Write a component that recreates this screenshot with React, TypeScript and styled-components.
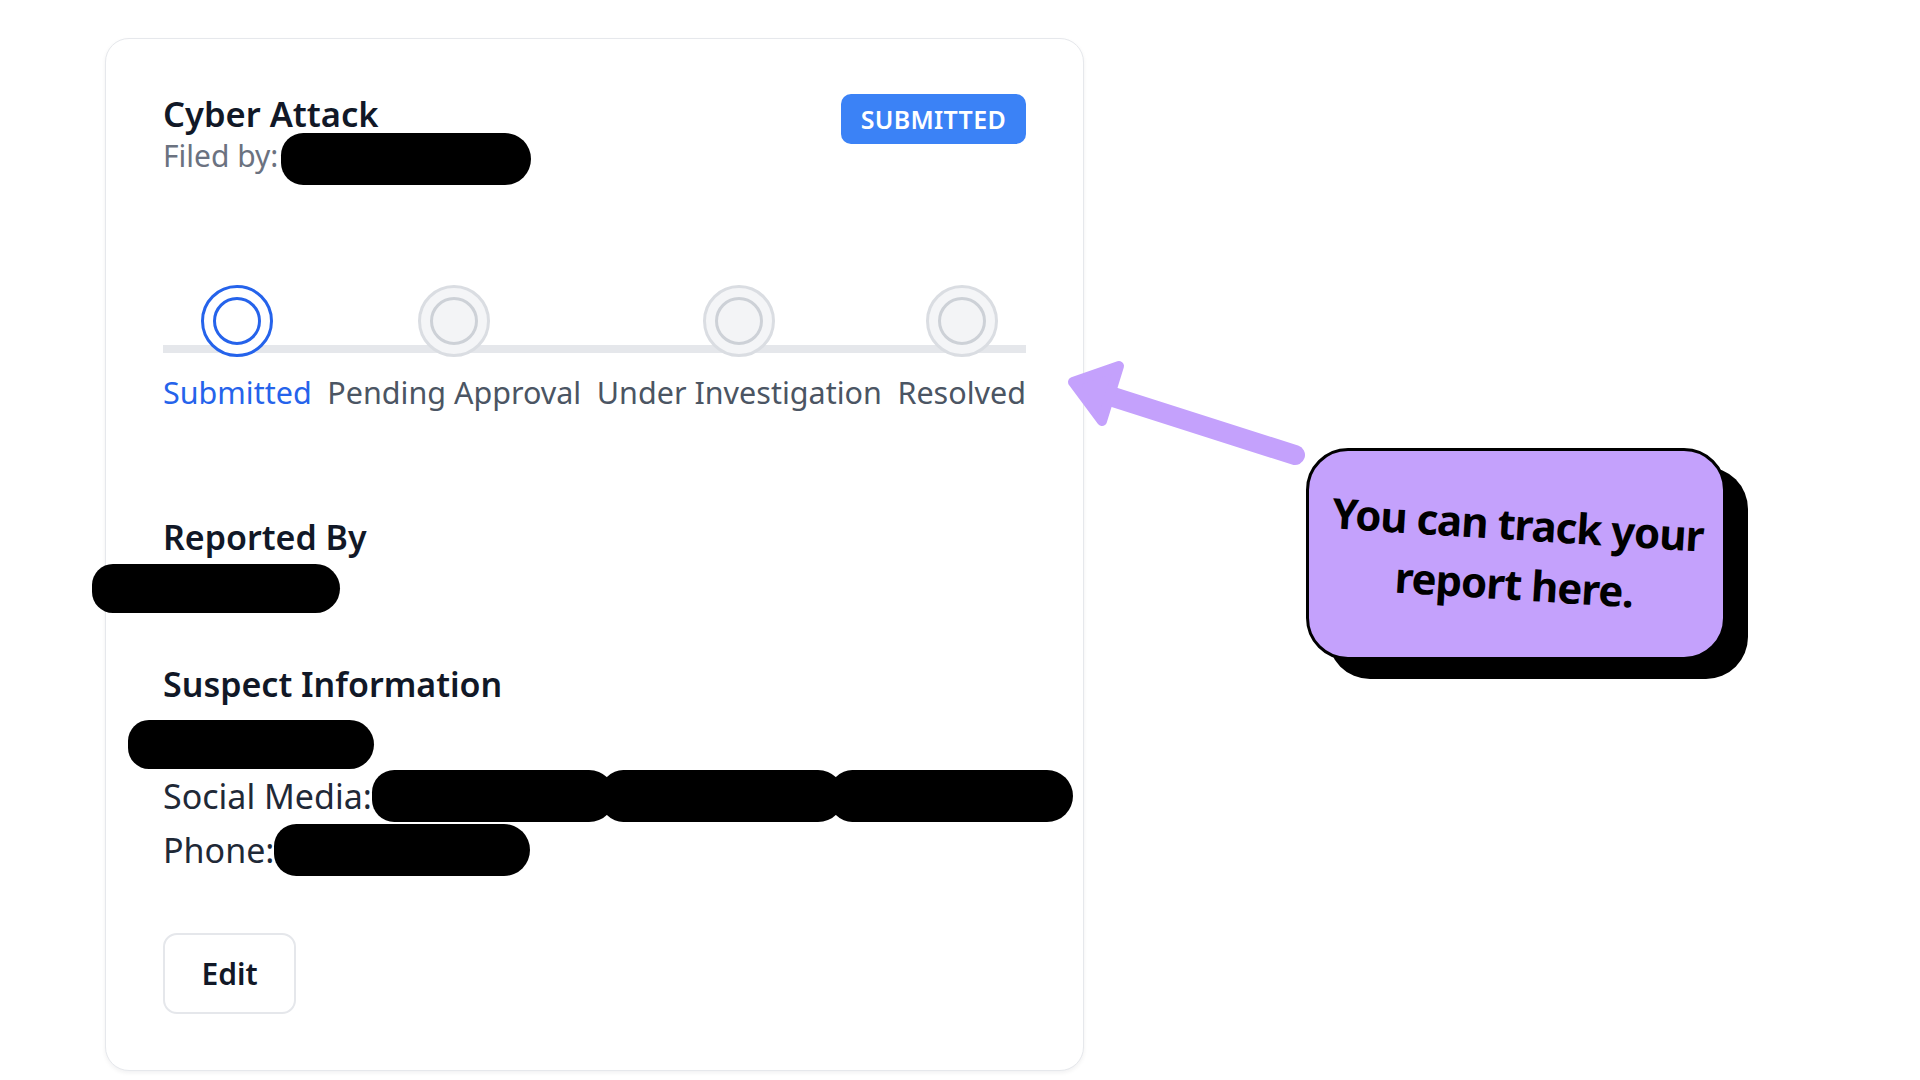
import React from "react";
import styled, { createGlobalStyle } from "styled-components";

const GlobalStyle = createGlobalStyle`
  html, body {
    margin: 0;
    padding: 0;
    background: #ffffff;
  }
  body {
    font-family: "Noto Sans", "Open Sans", sans-serif;
    color: #111827;
  }
  * { box-sizing: border-box; }
`;

const Page = styled.div`
  position: relative;
  min-height: 1080px;
  width: 1920px;
  padding-top: 38px;
  padding-left: 105px;
`;

const Card = styled.section`
  width: 979px;
  border: 1px solid #e6e8ec;
  border-radius: 24px;
  background: #ffffff;
  box-shadow: 0 2px 4px rgba(17, 24, 39, 0.06);
  padding: 53px 57px 56px 57px;
  display: flex;
  flex-direction: column;
`;

const Header = styled.div`
  display: flex;
  justify-content: space-between;
  align-items: flex-start;
`;

const TitleBlock = styled.div`
  display: flex;
  flex-direction: column;
`;

const Title = styled.h2`
  margin: 0;
  font-size: 34.5px;
  line-height: 44px;
  font-weight: 600;
  color: #111827;
`;

const FiledRow = styled.div`
  display: flex;
  align-items: flex-start;
  font-size: 30px;
  line-height: 40px;
  color: #6b7280;
  white-space: nowrap;
`;

const Redaction = styled.span<{ $w: number; $h?: number }>`
  display: block;
  flex: none;
  width: ${(p) => p.$w}px;
  height: ${(p) => p.$h ?? 52}px;
  background: #000000;
  border-radius: 24px 28px 28px 24px;
`;

const FiledBlot = styled(Redaction)`
  margin: -3px 0 -9px 3px;
`;

const Badge = styled.span`
  margin-top: 2px;
  height: 50px;
  padding: 0 20px;
  display: inline-flex;
  align-items: center;
  background: #3b82f6;
  color: #ffffff;
  border-radius: 10px;
  font-size: 25px;
  font-weight: 600;
  letter-spacing: 0.3px;
`;

const Stepper = styled.div`
  position: relative;
  margin-top: 109px;
`;

const Track = styled.div`
  position: absolute;
  left: 0;
  right: 0;
  top: 60px;
  height: 8px;
  background: #e5e7eb;
`;

const Steps = styled.div`
  position: relative;
  display: flex;
  justify-content: space-between;
`;

const Step = styled.div`
  display: flex;
  flex-direction: column;
  align-items: center;
`;

const Dot = styled.div<{ $active?: boolean }>`
  width: 72px;
  height: 72px;
  border-radius: 50%;
  border: 3.5px solid ${(p) => (p.$active ? "#2563eb" : "#dadde2")};
  background: ${(p) => (p.$active ? "#ffffff" : "#f4f5f7")};
  display: flex;
  align-items: center;
  justify-content: center;
`;

const DotCore = styled.div<{ $active?: boolean }>`
  width: 48px;
  height: 48px;
  border-radius: 50%;
  border: 3.5px solid ${(p) => (p.$active ? "#2563eb" : "#cdd1d7")};
  background: ${(p) => (p.$active ? "#ffffff" : "#f3f4f6")};
`;

const StepLabel = styled.span<{ $active?: boolean }>`
  margin-top: 15px;
  font-size: 30.5px;
  line-height: 40px;
  white-space: nowrap;
  color: ${(p) => (p.$active ? "#2563eb" : "#4b5563")};
`;

const SectionTitle = styled.h3<{ $gap: number }>`
  margin: ${(p) => p.$gap}px 0 0 0;
  font-size: 34px;
  line-height: 44px;
  font-weight: 600;
  color: #111827;
`;

const BlockBlot = styled(Redaction)<{ $top: number; $left: number }>`
  margin-top: ${(p) => p.$top}px;
  margin-left: ${(p) => p.$left}px;
`;

const InfoRow = styled.div<{ $gap: number }>`
  margin-top: ${(p) => p.$gap}px;
  display: flex;
  align-items: center;
  height: 52px;
  font-size: 34px;
  line-height: 46px;
  color: #1f2937;
`;

const InfoLabel = styled.span`
  flex: none;
  white-space: nowrap;
`;

const PillChain = styled.div`
  display: flex;
  flex: none;
`;

const ChainPill = styled(Redaction)`
  & + & {
    margin-left: -14px;
  }
`;

const EditButton = styled.button`
  margin-top: 57px;
  width: 133px;
  height: 81px;
  border: 2px solid #e5e7eb;
  border-radius: 14px;
  background: #ffffff;
  font-family: "Noto Sans", "Open Sans", sans-serif;
  font-size: 30px;
  font-weight: 600;
  color: #111827;
  cursor: pointer;
`;

const ArrowSvg = styled.svg`
  position: absolute;
  left: 1055px;
  top: 350px;
  width: 260px;
  height: 120px;
`;

const Callout = styled.div`
  position: absolute;
  left: 1306px;
  top: 448px;
  width: 420px;
  height: 212px;
  border: 3px solid #000000;
  border-radius: 42px;
  background: #c4a1fc;
  box-shadow: 22px 19px 0 0 #000000;
  display: flex;
  align-items: center;
  justify-content: center;
`;

const CalloutText = styled.p`
  margin: 0;
  transform: rotate(3.6deg);
  text-align: center;
  font-family: "Noto Sans", "Open Sans", sans-serif;
  font-weight: 700;
  font-size: 42px;
  line-height: 60px;
  letter-spacing: -1px;
  color: #000000;
`;

const steps = ["Submitted", "Pending Approval", "Under Investigation", "Resolved"];

export default function App() {
  return (
    <>
      <GlobalStyle />
      <Page>
        <Card>
          <Header>
            <TitleBlock>
              <Title>Cyber Attack</Title>
              <FiledRow>
                Filed by:
                <FiledBlot $w={250} />
              </FiledRow>
            </TitleBlock>
            <Badge>SUBMITTED</Badge>
          </Header>

          <Stepper>
            <Track />
            <Steps>
              {steps.map((s, i) => (
                <Step key={s}>
                  <Dot $active={i === 0}>
                    <DotCore $active={i === 0} />
                  </Dot>
                  <StepLabel $active={i === 0}>{s}</StepLabel>
                </Step>
              ))}
            </Steps>
          </Stepper>

          <SectionTitle $gap={103}>Reported By</SectionTitle>
          <BlockBlot $w={248} $h={49} $top={5} $left={-71} />

          <SectionTitle $gap={49}>Suspect Information</SectionTitle>
          <BlockBlot $w={246} $h={49} $top={14} $left={-35} />

          <InfoRow $gap={1}>
            <InfoLabel>Social Media:</InfoLabel>
            <PillChain>
              <ChainPill $w={243} />
              <ChainPill $w={243} />
              <ChainPill $w={243} />
            </PillChain>
          </InfoRow>
          <InfoRow $gap={2}>
            <InfoLabel>Phone:</InfoLabel>
            <Redaction $w={256} />
          </InfoRow>

          <div>
            <EditButton>Edit</EditButton>
          </div>
        </Card>

        <ArrowSvg viewBox="1055 350 260 120">
          <line
            x1={1110}
            y1={396}
            x2={1295}
            y2={455}
            stroke="#c4a1fc"
            strokeWidth={20}
            strokeLinecap="round"
          />
          <polygon
            points="1119,366 1073,382 1102,421"
            fill="#c4a1fc"
            stroke="#c4a1fc"
            strokeWidth={10}
            strokeLinejoin="round"
          />
        </ArrowSvg>

        <Callout>
          <CalloutText>
            You can track your
            <br />
            report here.
          </CalloutText>
        </Callout>
      </Page>
    </>
  );
}
